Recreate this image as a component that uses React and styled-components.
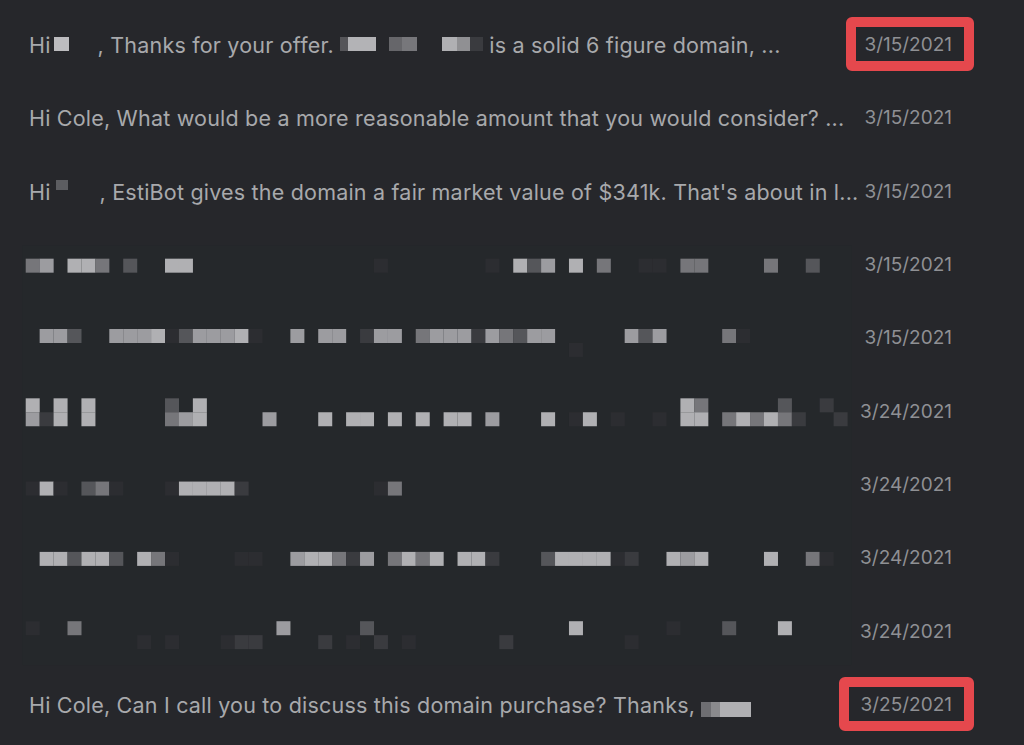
import React from 'react';
import styled, { createGlobalStyle } from 'styled-components';

const GlobalStyle = createGlobalStyle`
  html, body {
    margin: 0;
    background: #26272b;
  }
  body {
    font-family: Inter, "Noto Sans", sans-serif;
  }
`;

const Inbox = styled.div`
  width: 1024px;
  height: 745px;
  overflow: hidden;
  box-sizing: border-box;
  padding: 8.33px 72px 0 29px;
  background: #26272b;
`;

const Row = styled.div`
  display: flex;
  align-items: center;
  height: 73.33px;
`;

const Preview = styled.div`
  flex: 0 0 828px;
  min-width: 0;
  white-space: nowrap;
  overflow: hidden;
  font-size: 21.5px;
  letter-spacing: 0.2px;
  line-height: 28px;
  color: #a8a9ac;
`;

const DateCell = styled.div`
  position: relative;
  margin-left: auto;
  font-size: 19px;
  line-height: 24px;
  color: #8f9094;
`;

const Highlight = styled.span`
  position: absolute;
  top: -16px;
  bottom: -14px;
  left: ${p => p.$left}px;
  right: -22px;
  border: 10px solid #e5484d;
  border-radius: 6px;
`;

const RedactSvg = styled.svg`
  display: inline-block;
  vertical-align: ${p => p.$lift}px;
`;

const MosaicSvg = styled.svg`
  display: block;
  margin-left: -7px;
`;

// pixelated parts of the screenshot
const shade = {
  L: '#b0b0b3',
  M: '#9c9ca0',
  G: '#76767a',
  D: '#55565a',
  K: '#3a3b3f',
  V: '#2c2d31',
};

const mosaic = {
  0: '0G 1M 3L 4L 5G 7D 10L 11L 25V 33V 35L 36D 37M 39L 41G 44V 45V 47G 48G 53G 56D',
  5: '1M 2M 3D 6M 7M 8M 9L 10V 11D 12M 13M 14M 15L 16V 19M 21M 22M 24K 25M 26M 28G 29M 30M 31M 32K 33M 34G 35D 36M 37M 43M 44D 45M 50G 51V',
  6: '39V',
  10: '0L 2L 4L 10D 12L 47L 48G 54D 57K',
  11: '0M 1K 2L 4L 10G 11M 12L 17M 21L 23L 24L 26L 28L 30L 31L 33M 37L 39V 40L 42V 45V 47L 48L 50G 51L 52G 53L 54G 55K 58K',
  16: '0V 1L 2V 4D 5G 6V 10V 11L 12L 13L 14L 15K 25V 26G',
  21: '1L 2L 3D 4L 5L 6D 8L 9G 10V 15V 16V 19M 20L 21L 22G 23K 24M 26G 27L 28G 29L 31L 32L 33K 37D 38L 39L 40L 41L 42V 43K 46L 47M 48L 53L 56G 57V',
  26: '0V 3G 18M 24D 39L 46V 50D 54L',
  27: '8V 10V 14V 15K 16K 21K 23V 25K 27V 34K 43V',
};

const tiles = Object.entries(mosaic).flatMap(([r, line]) =>
  line.split(' ').map(t => ({
    x: 25.7 + 13.93 * parseInt(t, 10),
    y: 259 + 13.93 * Number(r),
    fill: shade[t.slice(-1)],
  }))
);

const Mosaic = ({ index }) => {
  const top = index * 73.33;
  return (
    <MosaicSvg width="830" height="73.33" viewBox={`22 ${top + 8.33} 830 73.33`}>
      <rect x="22" y="246" width="830" height="419" fill="#25282b" />
      {tiles.map((t, i) => (
        <rect key={i} x={t.x} y={t.y} width="14" height="14" fill={t.fill} />
      ))}
    </MosaicSvg>
  );
};

const Redacted = ({ width, height, lift, blocks }) => (
  <RedactSvg width={width} height={height} $lift={lift}>
    {blocks.map(([x, w, fill, y = 0, h = height], i) => (
      <rect key={i} x={x} y={y} width={w} height={h} fill={fill} />
    ))}
  </RedactSvg>
);

const messages = [
  {
    body: (
      <>
        Hi
        <Redacted width={47} height={14} lift={2} blocks={[[3, 15, '#bcbcbf']]} />
        , Thanks for your offer.{' '}
        <Redacted
          width={143}
          height={14}
          lift={2}
          blocks={[
            [0, 8, '#555559'],
            [8, 28, '#b3b3b6'],
            [49, 13, '#66666a'],
            [62, 15, '#77777b'],
            [102, 15, '#b0b0b3'],
            [117, 13, '#909093'],
            [130, 13, '#3a3b3f'],
          ]}
        />{' '}
        is a solid 6 figure domain, ...
      </>
    ),
    date: '3/15/2021',
    mark: -18,
  },
  { body: 'Hi Cole, What would be a more reasonable amount that you would consider? ...', date: '3/15/2021' },
  {
    body: (
      <>
        Hi
        <Redacted width={49} height={20} lift={0} blocks={[[5, 12, '#5c5d61', 0, 10]]} />
        , EstiBot gives the domain a fair market value of $341k. That's about in l...
      </>
    ),
    date: '3/15/2021',
  },
  { mosaic: true, date: '3/15/2021' },
  { mosaic: true, date: '3/15/2021' },
  { mosaic: true, date: '3/24/2021' },
  { mosaic: true, date: '3/24/2021' },
  { mosaic: true, date: '3/24/2021' },
  { mosaic: true, date: '3/24/2021' },
  {
    body: (
      <>
        Hi Cole, Can I call you to discuss this domain purchase? Thanks,{' '}
        <Redacted
          width={50}
          height={15}
          lift={-4}
          blocks={[
            [0, 10, '#6e6e72'],
            [10, 9, '#8a8a8d'],
            [19, 31, '#b0b0b3'],
          ]}
        />
      </>
    ),
    date: '3/25/2021',
    mark: -22,
  },
];

const App = () => (
  <Inbox>
    <GlobalStyle />
    {messages.map((m, i) => (
      <Row key={i}>
        {m.mosaic ? <Mosaic index={i} /> : <Preview>{m.body}</Preview>}
        <DateCell>
          {m.date}
          {m.mark !== undefined && <Highlight $left={m.mark} />}
        </DateCell>
      </Row>
    ))}
  </Inbox>
);

export default App;
